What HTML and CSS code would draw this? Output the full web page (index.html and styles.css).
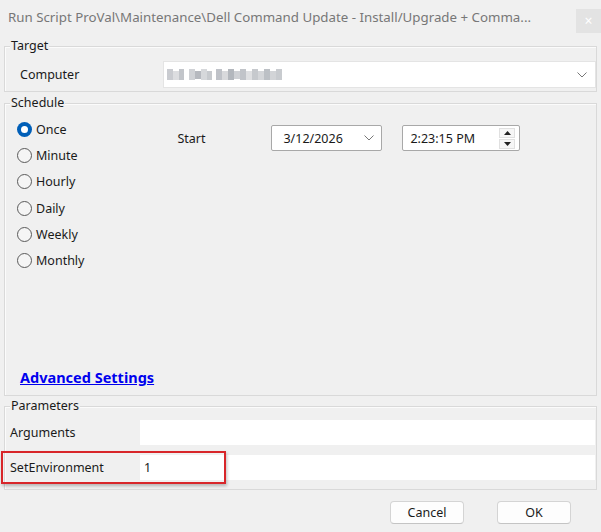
FILE: index.html
```html
<!DOCTYPE html>
<html>
<head>
<meta charset="utf-8">
<link rel="stylesheet" href="styles.css">
</head>
<body>
<div class="dialog">
  <div class="titlebar">
    <span class="title">Run Script ProVal\Maintenance\Dell Command Update - Install/Upgrade + Comma...</span>
    <span class="close">×</span>
  </div>

  <div class="group group-target">
    <div class="legend"><span>Target</span></div>
    <div class="row-computer">
      <span class="lbl lbl-computer">Computer</span>
      <div class="combo combo-computer">
        <svg class="blur" width="118" height="13" viewBox="0 0 118 13">
          <rect x="0" y="1" width="6" height="11" fill="#c9cbd0"/>
          <rect x="6" y="3" width="6" height="9" fill="#dcdde0"/>
          <rect x="12" y="1" width="5" height="11" fill="#c2c5ca"/>
          <rect x="22" y="1" width="6" height="11" fill="#d0d2d6"/>
          <rect x="28" y="3" width="6" height="8" fill="#b6b9bf"/>
          <rect x="34" y="1" width="6" height="11" fill="#d6d8db"/>
          <rect x="40" y="3" width="5" height="9" fill="#c7cace"/>
          <rect x="49" y="1" width="6" height="11" fill="#bfc2c8"/>
          <rect x="55" y="3" width="6" height="9" fill="#d8d9dc"/>
          <rect x="61" y="1" width="6" height="11" fill="#b3b7bd"/>
          <rect x="67" y="3" width="6" height="8" fill="#cfd1d5"/>
          <rect x="73" y="1" width="6" height="11" fill="#c1c4c9"/>
          <rect x="79" y="3" width="6" height="9" fill="#dfe0e2"/>
          <rect x="85" y="1" width="6" height="11" fill="#c6c9cd"/>
          <rect x="91" y="3" width="6" height="9" fill="#d4d6d9"/>
          <rect x="97" y="1" width="6" height="11" fill="#bcc0c5"/>
          <rect x="103" y="3" width="6" height="9" fill="#d2d4d7"/>
          <rect x="109" y="1" width="6" height="11" fill="#c8cbcf"/>
        </svg>
        <svg class="chev" width="10" height="6" viewBox="0 0 10 6"><path d="M0.5 0.5 L5 5 L9.5 0.5" fill="none" stroke="#777" stroke-width="1"/></svg>
      </div>
    </div>
  </div>

  <div class="group group-schedule">
    <div class="legend"><span>Schedule</span></div>
    <div class="schedule-body">
      <div class="radios">
        <div class="radio-row"><span class="radio checked"></span><span>Once</span></div>
        <div class="radio-row"><span class="radio"></span><span>Minute</span></div>
        <div class="radio-row"><span class="radio"></span><span>Hourly</span></div>
        <div class="radio-row"><span class="radio"></span><span>Daily</span></div>
        <div class="radio-row"><span class="radio"></span><span>Weekly</span></div>
        <div class="radio-row"><span class="radio"></span><span>Monthly</span></div>
      </div>
      <div class="start">
        <span class="lbl lbl-start">Start</span>
        <div class="box date">
          <span>3/12/2026</span>
          <svg class="chev" width="10" height="6" viewBox="0 0 10 6"><path d="M0.5 0.5 L5 5 L9.5 0.5" fill="none" stroke="#777" stroke-width="1"/></svg>
        </div>
        <div class="box time">
          <span>2:23:15 PM</span>
          <div class="spin">
            <div class="spin-btn"><svg width="7" height="4" viewBox="0 0 7 4"><path d="M0 4 L3.5 0 L7 4 Z" fill="#222"/></svg></div>
            <div class="spin-btn"><svg width="7" height="4" viewBox="0 0 7 4"><path d="M0 0 L3.5 4 L7 0 Z" fill="#222"/></svg></div>
          </div>
        </div>
      </div>
    </div>
    <a class="adv" href="#">Advanced Settings</a>
  </div>

  <div class="group group-params">
    <div class="legend"><span>Parameters</span></div>
    <div class="param-row">
      <span class="lbl lbl-param">Arguments</span>
      <div class="field"></div>
    </div>
    <div class="param-row param-env">
      <span class="lbl lbl-param">SetEnvironment</span>
      <div class="field">1</div>
      <div class="highlight"></div>
    </div>
  </div>

  <div class="buttons">
    <div class="btn">Cancel</div>
    <div class="btn">OK</div>
  </div>
</div>
</body>
</html>
```

FILE: styles.css
```css
* { box-sizing: border-box; }
html, body { margin: 0; padding: 0; }
body {
  width: 601px;
  height: 532px;
  background: #f0f0f0;
  font-family: "Noto Sans", "Open Sans", sans-serif;
  font-size: 12.5px;
  color: #1a1a1a;
  overflow: hidden;
}
.dialog { width: 601px; height: 532px; }

.titlebar {
  height: 33px;
  display: flex;
  align-items: center;
  justify-content: space-between;
  padding-left: 8px;
}
.title { color: #777; font-size: 13.3px; white-space: nowrap; }
.close {
  align-self: flex-end;
  width: 25px;
  height: 24px;
  background: #e3e3e3;
  color: #fff;
  font-size: 14px;
  line-height: 24px;
  text-align: center;
}

.group {
  margin: 0 4px;
  border: 1px solid #d9d9d9;
  box-shadow: inset 1px 1px 0 #fbfbfb;
}
.legend {
  height: 16px;
  margin-top: -9px;
  line-height: 16px;
}
.legend span {
  display: inline-block;
  margin-left: 5px;
  padding: 0 1px;
  background: #f0f0f0;
}
.group-target { margin-top: 13px; height: 46px; }
.row-computer {
  display: flex;
  align-items: center;
  margin-top: 7px;
}
.lbl-computer { margin-left: 15px; width: 143px; }
.combo {
  flex: 1;
  height: 27px;
  background: #fff;
  border: 1px solid #e4e4e4;
  display: flex;
  align-items: center;
  justify-content: space-between;
  padding: 0 8px 0 3px;
}

.group-schedule { margin-top: 11px; height: 293px; }
.schedule-body { display: flex; align-items: flex-start; }
.radios { margin-left: 12px; margin-top: 5px; }
.radio-row {
  display: flex;
  align-items: center;
  height: 26.3px;
  gap: 4px;
}
.radio {
  width: 15px;
  height: 15px;
  border-radius: 50%;
  border: 1px solid #5a5a5a;
  background: #f5f5f5;
}
.radio.checked {
  border: none;
  background: #005fb8;
  display: flex;
  align-items: center;
  justify-content: center;
}
.radio.checked::after {
  content: "";
  width: 7px;
  height: 7px;
  border-radius: 50%;
  background: #fff;
}
.start {
  display: flex;
  align-items: center;
  margin-left: 93px;
  margin-top: 14px;
  height: 26px;
}
.lbl-start { width: 94px; }
.box {
  height: 26px;
  background: #fff;
  border: 1px solid #a8a8a8;
  border-radius: 2px;
  display: flex;
  align-items: center;
  justify-content: space-between;
}
.date { width: 111px; padding: 0 7px 0 11px; }
.time { width: 118px; margin-left: 20px; padding: 0 4px 0 7px; }
.spin { display: flex; flex-direction: column; gap: 1px; }
.spin-btn {
  width: 16px;
  height: 10px;
  border: 1px solid #e0e0e0;
  background: #f6f6f6;
  display: flex;
  align-items: center;
  justify-content: center;
}
.adv {
  display: block;
  margin-left: 15px;
  margin-top: 93px;
  color: #0000ee;
  font-weight: bold;
  font-size: 14.5px;
  line-height: 20px;
  text-decoration: underline;
  width: max-content;
}

.group-params { margin-top: 10px; height: 84px; }
.param-row {
  display: flex;
  align-items: center;
  height: 25px;
  position: relative;
  margin-top: 6px;
}
.param-env { margin-top: 10px; }
.lbl-param { margin-left: 5px; width: 130px; }
.field {
  flex: 1;
  height: 25px;
  background: #fff;
  margin-right: 1px;
  padding-left: 4px;
  display: flex;
  align-items: center;
}
.highlight {
  position: absolute;
  left: -4px;
  top: -4px;
  width: 225px;
  height: 33px;
  border: 2px solid #d8262a;
  box-shadow: 1px 2px 3px rgba(0,0,0,0.25);
}

.buttons {
  display: flex;
  justify-content: flex-end;
  gap: 33px;
  margin-top: 11px;
  padding-right: 30px;
}
.btn {
  width: 74px;
  height: 23px;
  background: #fdfdfd;
  border: 1px solid #d4d4d4;
  border-bottom-color: #c4c4c4;
  border-radius: 4px;
  display: flex;
  align-items: center;
  justify-content: center;
}
```
